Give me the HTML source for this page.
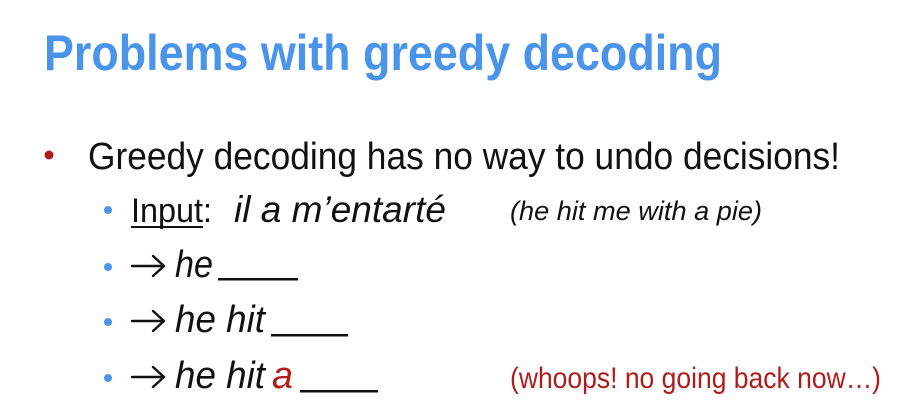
<!DOCTYPE html>
<html><head><meta charset="utf-8"><style>body{margin:0;background:#fff}svg{display:block}</style></head><body>
<svg width="899" height="412" xmlns="http://www.w3.org/2000/svg" font-family="Liberation Sans, sans-serif">
<rect width="899" height="412" fill="#fff"/>
<text x="44" y="70" font-size="50" font-weight="bold" fill="#4a95ea" textLength="678" lengthAdjust="spacingAndGlyphs">Problems with greedy decoding</text>
<circle cx="49" cy="155" r="4.5" fill="#b01c1c"/>
<text x="88" y="169" font-size="38" fill="#111" textLength="752" lengthAdjust="spacingAndGlyphs">Greedy decoding has no way to undo decisions!</text>
<circle cx="108" cy="210" r="4" fill="#4a95ea"/>
<text x="131" y="222" font-size="34" fill="#111" textLength="81" lengthAdjust="spacingAndGlyphs">Input:</text>
<rect x="131" y="226" width="72" height="2" fill="#111"/>
<text x="234" y="222" font-size="37" font-style="italic" fill="#111" textLength="212" lengthAdjust="spacingAndGlyphs">il a m’entarté</text>
<text x="510" y="220" font-size="27" font-style="italic" fill="#111" textLength="252" lengthAdjust="spacingAndGlyphs">(he hit me with a pie)</text>
<g stroke="#111" stroke-width="2.4" fill="none" stroke-linecap="round" stroke-linejoin="round">
<path d="M132 266H163M153 256L164 266L153 276"/>
<path d="M132 321H163M153 311L164 321L153 331"/>
<path d="M132 377H163M153 367L164 377L153 387"/>
</g>
<circle cx="108" cy="267" r="4" fill="#4a95ea"/>
<text x="175" y="277" font-size="38" font-style="italic" fill="#111" textLength="38" lengthAdjust="spacingAndGlyphs">he</text>
<rect x="218" y="278" width="80" height="2.5" fill="#111"/>
<circle cx="108" cy="322" r="4" fill="#4a95ea"/>
<text x="175" y="332" font-size="38" font-style="italic" fill="#111" textLength="90" lengthAdjust="spacingAndGlyphs">he hit</text>
<rect x="271" y="334" width="77" height="2.5" fill="#111"/>
<circle cx="108" cy="378" r="4" fill="#4a95ea"/>
<text x="175" y="388" font-size="38" font-style="italic" fill="#111" textLength="90" lengthAdjust="spacingAndGlyphs">he hit</text>
<text x="272" y="388" font-size="38" font-style="italic" fill="#b01c1c" textLength="21" lengthAdjust="spacingAndGlyphs">a</text>
<rect x="300" y="390" width="78" height="2.5" fill="#111"/>
<text x="510" y="388" font-size="30" fill="#b01c1c" textLength="371" lengthAdjust="spacingAndGlyphs">(whoops! no going back now…)</text>
</svg>
</body></html>
